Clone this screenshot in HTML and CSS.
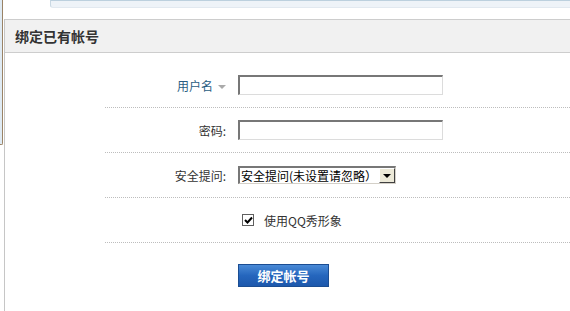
FILE: index.html
```html
<!doctype html>
<html>
<head>
    <meta charset="utf-8" />
    <title>绑定已有帐号</title>
    <link rel="stylesheet" href="styles.css">
</head>
<body>
    <div class="page">
        <div class="edge"><div class="edge-strip"></div></div>
        <div class="content">
            <div class="topbar"><div class="tab"></div></div>
            <div class="panel">
                <h2 class="panel-title">绑定已有帐号</h2>
                <form class="bind-form">
                    <div class="row">
                        <label class="row-label row-label-user" for="username">用户名<span class="caret"></span></label>
                        <input id="username" class="text-input" type="text">
                    </div>
                    <div class="row">
                        <label class="row-label" for="password">密码:</label>
                        <input id="password" class="text-input" type="password">
                    </div>
                    <div class="row">
                        <label class="row-label">安全提问:</label>
                        <div class="fake-select">
                            <span class="fake-select-text">安全提问(未设置请忽略）</span>
                            <span class="fake-select-btn"><span class="arrow"></span></span>
                        </div>
                    </div>
                    <div class="row">
                        <span class="row-label"></span>
                        <label class="check">
                            <span class="check-box">
                                <svg width="9" height="9" viewBox="0 0 9 9"><path d="M1 4 L3.5 6.5 L8 1.5" fill="none" stroke="#000" stroke-width="2"/></svg>
                            </span>
                            使用QQ秀形象
                        </label>
                    </div>
                    <div class="row-submit">
                        <button class="submit-btn" type="button">绑定帐号</button>
                    </div>
                </form>
            </div>
        </div>
    </div>
</body>
</html>
```

FILE: styles.css
```css
body {
    margin: 0;
    background: #fff;
    font-size: 12px;
    color: #333;
    font-family: "Noto Sans CJK SC", "DejaVu Sans", sans-serif;
}
.page {
    display: flex;
    min-height: 311px;
}
.edge {
    width: 4px;
    flex-shrink: 0;
}
.edge-strip {
    width: 2px;
    height: 144px;
    background: #dfeaf3;
    border-right: 1px solid #9a8366;
    border-bottom: 1px solid #9a8366;
    border-bottom-right-radius: 2px;
}
.content {
    flex: 1;
}
.topbar {
    height: 19px;
}
.tab {
    margin-left: 46px;
    height: 6px;
    background: #eef3f8;
    border-top: 1px solid #bcd0de;
    border-bottom: 1px solid #e2e9f0;
    border-left: 1px solid #c9d8e3;
    border-bottom-left-radius: 3px;
}
.panel {
    border-left: 1px solid #c6c6c6;
    min-height: 292px;
}
.panel-title {
    margin: 0;
    height: 32px;
    line-height: 32px;
    padding-left: 10px;
    font-size: 14px;
    font-weight: bold;
    color: #333;
    background: #f1f1f1;
    border-top: 1px solid #cdcdcd;
    border-bottom: 1px solid #cdcdcd;
}
.bind-form {
    margin: 10px 0 0 100px;
}
.row {
    display: flex;
    align-items: center;
    height: 44px;
    border-bottom: 1px dotted #bdbdbd;
}
.row-label {
    width: 121px;
    margin-right: 12px;
    text-align: right;
    color: #333;
}
.row-label-user {
    color: #2a5d82;
}
.caret {
    display: inline-block;
    margin-left: 5px;
    vertical-align: middle;
    border-left: 4px solid transparent;
    border-right: 4px solid transparent;
    border-top: 4px solid #aaa;
}
.text-input {
    box-sizing: border-box;
    width: 205px;
    height: 20px;
    margin: 0;
    padding: 0 2px;
    font-size: 12px;
    border-top: 2px solid #777;
    border-left: 2px solid #777;
    border-right: 1px solid #dcdcdc;
    border-bottom: 1px solid #dcdcdc;
    outline: none;
}
.fake-select {
    box-sizing: border-box;
    display: flex;
    align-items: center;
    width: 158px;
    height: 18px;
    border-top: 2px solid #777;
    border-left: 2px solid #777;
    border-right: 1px solid #d4d0c8;
    border-bottom: 1px solid #d4d0c8;
    background: #fff;
}
.fake-select-text {
    flex: 1;
    padding-left: 1px;
    line-height: 15px;
    color: #000;
    white-space: nowrap;
}
.fake-select-btn {
    box-sizing: border-box;
    display: flex;
    align-items: center;
    justify-content: center;
    width: 16px;
    height: 15px;
    background: #ece9d8;
    border-top: 1px solid #fff;
    border-left: 1px solid #fff;
    border-right: 1px solid #404040;
    border-bottom: 1px solid #404040;
}
.arrow {
    border-left: 4px solid transparent;
    border-right: 4px solid transparent;
    border-top: 4px solid #000;
}
.check {
    display: flex;
    align-items: center;
    margin-left: 4px;
    color: #333;
}
.check-box {
    box-sizing: border-box;
    display: flex;
    align-items: center;
    justify-content: center;
    width: 12px;
    height: 12px;
    margin-right: 10px;
    border: 1px solid #5f5f5f;
    background: #fff;
}
.row-submit {
    padding: 21px 0 0 133px;
}
.submit-btn {
    width: 91px;
    height: 23px;
    padding: 0;
    font-family: inherit;
    font-size: 13px;
    font-weight: bold;
    color: #fff;
    background: linear-gradient(#4a8ad6, #2566bd 50%, #1d58ac);
    border: 1px solid #1b4d92;
    cursor: pointer;
}
```
